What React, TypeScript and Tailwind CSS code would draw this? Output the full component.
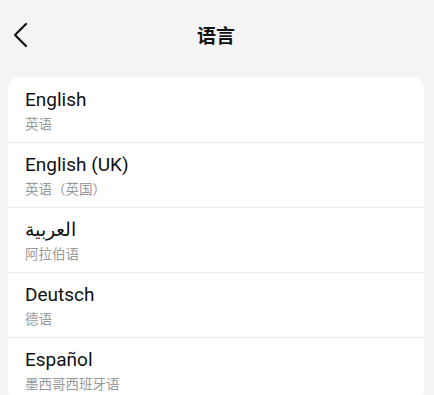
import React from "react";

const items = [
  { name: "English", sub: "英语" },
  { name: "English (UK)", sub: "英语（英国）" },
  { name: "العربية", sub: "阿拉伯语" },
  { name: "Deutsch", sub: "德语" },
  { name: "Español", sub: "墨西哥西班牙语" },
];

export default function App() {
  return (
    <div
      className="w-[434px] h-[395px] overflow-hidden bg-[#f4f4f4]"
      style={{ fontFamily: 'Roboto, "Noto Sans CJK SC", sans-serif' }}
    >
      <div className="relative h-[77px] flex items-start justify-center">
        <svg
          className="absolute left-[12px] top-[22px]"
          width="18"
          height="26"
          viewBox="0 0 18 26"
          fill="none"
          stroke="#111"
          strokeWidth="2.2"
          strokeLinecap="round"
          strokeLinejoin="round"
        >
          <path d="M14 2 L3 13 L14 24" />
        </svg>
        <div className="mt-[23px] ml-[-2px] text-[19px] leading-[28px] font-bold text-[#111]">语言</div>
      </div>
      <div className="ml-[8px] w-[416px] bg-white rounded-[12px] overflow-hidden">
        {items.map((it, i) => (
          <div
            key={i}
            className={`h-[65px] pl-[17px] ${i > 0 ? "border-t border-[#ececec] pt-[9px]" : "h-[64px] pt-[10px]"}`}
          >
            <div className="text-[19px] leading-[26px] text-[#111]">{it.name}</div>
            <div className="mt-[2px] text-[13.5px] leading-[18px] text-[#9a9a9a]">{it.sub}</div>
          </div>
        ))}
      </div>
    </div>
  );
}
